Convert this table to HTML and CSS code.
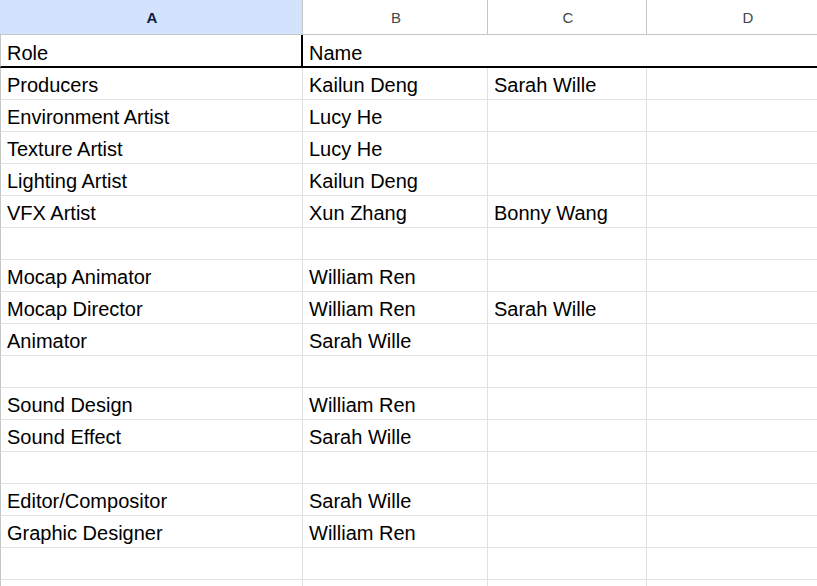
FILE: index.html
```html
<!DOCTYPE html>
<html>
<head>
<meta charset="utf-8">
<link rel="stylesheet" href="styles.css">
</head>
<body>
<div class="sheet">
  <div class="hd hd-sel">A</div>
  <div class="hd">B</div>
  <div class="hd">C</div>
  <div class="hd hd-last">D</div>

  <div class="c r1 r1a">Role</div>
  <div class="c r1 r1b">Name</div>

  <div class="c">Producers</div><div class="c">Kailun Deng</div><div class="c">Sarah Wille</div><div class="c"></div>
  <div class="c">Environment Artist</div><div class="c">Lucy He</div><div class="c"></div><div class="c"></div>
  <div class="c">Texture Artist</div><div class="c">Lucy He</div><div class="c"></div><div class="c"></div>
  <div class="c">Lighting Artist</div><div class="c">Kailun Deng</div><div class="c"></div><div class="c"></div>
  <div class="c">VFX Artist</div><div class="c">Xun Zhang</div><div class="c">Bonny Wang</div><div class="c"></div>
  <div class="c"></div><div class="c"></div><div class="c"></div><div class="c"></div>
  <div class="c">Mocap Animator</div><div class="c">William Ren</div><div class="c"></div><div class="c"></div>
  <div class="c">Mocap Director</div><div class="c">William Ren</div><div class="c">Sarah Wille</div><div class="c"></div>
  <div class="c">Animator</div><div class="c">Sarah Wille</div><div class="c"></div><div class="c"></div>
  <div class="c"></div><div class="c"></div><div class="c"></div><div class="c"></div>
  <div class="c">Sound Design</div><div class="c">William Ren</div><div class="c"></div><div class="c"></div>
  <div class="c">Sound Effect</div><div class="c">Sarah Wille</div><div class="c"></div><div class="c"></div>
  <div class="c"></div><div class="c"></div><div class="c"></div><div class="c"></div>
  <div class="c">Editor/Compositor</div><div class="c">Sarah Wille</div><div class="c"></div><div class="c"></div>
  <div class="c">Graphic Designer</div><div class="c">William Ren</div><div class="c"></div><div class="c"></div>
  <div class="c"></div><div class="c"></div><div class="c"></div><div class="c"></div>
  <div class="c"></div><div class="c"></div><div class="c"></div><div class="c"></div>
</div>
</body>
</html>
```
FILE: styles.css
```css
html, body {
  margin: 0;
  padding: 0;
  background: #ffffff;
  overflow: hidden;
}

.sheet {
  display: grid;
  grid-template-columns: 303px 185px 159px 200px;
  grid-auto-rows: 32px;
  grid-template-rows: 35px 33px;
  width: 847px;
  font-family: "Liberation Sans", Arial, sans-serif;
}

.hd {
  box-sizing: border-box;
  border-right: 1px solid #c4c7c5;
  border-bottom: 1px solid #c4c7c5;
  display: flex;
  align-items: center;
  justify-content: center;
  font-size: 15px;
  color: #444746;
  background: #ffffff;
  padding-top: 1px;
  padding-left: 2px;
}

.hd-sel {
  background: #d3e3fd;
  color: #0b1c43;
  font-weight: bold;
}

.hd-last {
  border-right: none;
}

.c {
  box-sizing: border-box;
  border-right: 1px solid #e1e1e1;
  border-bottom: 1px solid #e1e1e1;
  font-size: 20px;
  line-height: 23px;
  color: #000000;
  padding-left: 6px;
  display: flex;
  align-items: flex-end;
  padding-bottom: 2px;
  white-space: nowrap;
  overflow: hidden;
}

.c:nth-child(4n + 7) {
  border-left: 1px solid #c4c7c5;
}

.r1 {
  border-bottom: 2px solid #000000;
  padding-bottom: 1px;
}

.r1a {
  border-left: 1px solid #c4c7c5;
  border-right: 2px solid #000000;
}

.r1b {
  grid-column: 2 / 5;
  border-right: none;
}
```
